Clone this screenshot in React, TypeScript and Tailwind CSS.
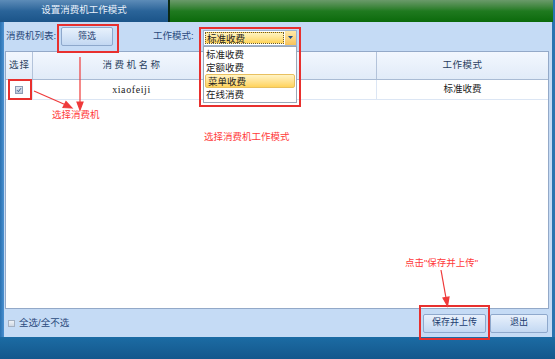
import React from "react";

const font = { fontFamily: '"Liberation Sans","Noto Sans CJK SC",sans-serif' };

function Btn({ label, w }: { label: string; w: string }) {
  return (
    <div
      className={`${w} h-[19px] flex items-center justify-center rounded-[2px] border border-[#8ea8cc] bg-gradient-to-b from-[#e8f1fc] to-[#c3d8f2] text-[9px] text-[#1d3d70]`}
    >
      {label}
    </div>
  );
}

export default function App() {
  return (
    <div className="relative w-[555px] h-[359px] overflow-hidden flex flex-col bg-[#c5dbf5]" style={font}>
      {/* title bar */}
      <div className="h-[22px] flex">
        <div className="w-[168px] bg-gradient-to-b from-[#5d8cb8] via-[#2a6499] to-[#1b5489] flex items-center justify-center text-[9.5px] text-[#e8f0fa] pb-[2px]">
          设置消费机工作模式
        </div>
        <div className="w-[2px] bg-[#0b2a14]" />
        <div className="flex-1 bg-gradient-to-b from-[#6a9a6a] via-[#1f7a1f] to-[#0a6a0a]" />
        <div className="w-[2px] bg-[#2a74b0]" />
      </div>

      {/* middle */}
      <div className="flex-1 flex">
        <div className="w-[4px] bg-gradient-to-r from-[#2a72b2] to-[#4a90d0]" />
        <div className="flex-1 flex flex-col">
          {/* toolbar */}
          <div className="h-[29px] flex items-center text-[9.5px] text-[#2b4a7c]">
            <div className="w-[57px] pl-[2px]">消费机列表:</div>
            <Btn label="筛选" w="w-[52px]" />
            <div className="w-[40px]" />
            <div className="w-[50px]">工作模式:</div>
            <div className="relative w-[94px] h-[16px] flex border border-[#9fb3cf] bg-white mt-[2px]">
              <div className="flex-1 m-[1px] border border-dotted border-[#6a5a30] bg-gradient-to-b from-[#fff4c0] to-[#ffd455] text-[9.5px] text-[#222] leading-[11px] pl-[1px]">
                标准收费
              </div>
              <div className="w-[11px] flex items-center justify-center bg-gradient-to-b from-[#ffe9a8] to-[#f7c35a]">
                <svg width="5" height="3" viewBox="0 0 5 3">
                  <path d="M0 0 L5 0 L2.5 3 Z" fill="#1d4a8a" />
                </svg>
              </div>
              {/* dropdown list */}
              <div className="absolute left-[-1px] top-[15px] w-[94px] h-[57px] border border-[#9aa8b8] bg-white flex flex-col pt-[1px] text-[9.5px] text-[#222] z-10">
                <div className="h-[13px] pl-[2px] leading-[13px]">标准收费</div>
                <div className="h-[13px] pl-[2px] leading-[13px]">定额收费</div>
                <div className="h-[14px] pl-[2px] leading-[14px] mx-[1px] rounded-[2px] border border-[#e8c060] bg-gradient-to-b from-[#fff3c4] to-[#ffd35a]">菜单收费</div>
                <div className="h-[13px] pl-[2px] leading-[13px]">在线消费</div>
              </div>
            </div>
          </div>

          {/* grid */}
          <div className="flex-1 ml-[1px] mr-[3px] border border-[#93a9c8] bg-white flex flex-col">
            <div className="h-[28px] flex border-b border-[#a9bbd4] bg-gradient-to-b from-[#f2f7fe] to-[#e1ebf8] text-[9.5px] text-[#2a3f60]">
              <div className="w-[27px] border-r border-[#b3c3da] flex items-center justify-center tracking-[1px] pl-[1px]">选择</div>
              <div className="w-[198px] border-r border-[#b3c3da] flex items-center justify-center tracking-[2.5px] pl-[2px]">消费机名称</div>
              <div className="w-[146px] border-r border-[#b3c3da] flex items-center pl-[25px]">安装位置</div>
              <div className="flex-1 flex items-center justify-center tracking-[0.5px]">工作模式</div>
            </div>
            <div className="h-[20px] flex border-b border-[#dce6f4] text-[9.5px] text-[#222]">
              <div className="w-[27px] border-r border-[#dce6f4] flex items-center justify-center">
                <div className="w-[8px] h-[8px] border border-[#8c9cb4] bg-gradient-to-b from-[#dfe6f0] to-[#b9c6d8] flex items-center justify-center">
                  <svg width="6" height="6" viewBox="0 0 6 6">
                    <path d="M1 3.2 L2.4 4.6 L5 1.2" stroke="#3a5a8a" strokeWidth="1" fill="none" />
                  </svg>
                </div>
              </div>
              <div
                className="w-[198px] border-r border-[#dce6f4] flex items-center justify-center text-[10px] tracking-[0.6px]"
                style={{ fontFamily: '"Liberation Serif",serif' }}
              >
                xiaofeiji
              </div>
              <div className="w-[146px] border-r border-[#dce6f4] flex items-center pl-[25px]">一楼餐厅</div>
              <div className="flex-1 flex items-center justify-center">标准收费</div>
            </div>
          </div>

          {/* footer */}
          <div className="h-[28px] flex items-center text-[9.5px] text-[#2b4a7c]">
            <div className="ml-[4px] w-[7px] h-[7px] border border-[#a3b0c2] bg-gradient-to-b from-[#eef2f7] to-[#cfd8e4]" />
            <div className="ml-[4px]">全选/全不选</div>
            <div className="flex-1" />
            <Btn label="保存并上传" w="w-[63px]" />
            <div className="w-[4px]" />
            <Btn label="退出" w="w-[58px]" />
            <div className="w-[4px]" />
          </div>
        </div>
        <div className="w-[3px] bg-[#2a74b0]" />
      </div>

      {/* bottom bar */}
      <div className="h-[22px] bg-gradient-to-b from-[#1c6ca4] to-[#14578c]" />

      {/* annotations overlay */}
      <svg className="absolute inset-0 pointer-events-none" width="555" height="359" viewBox="0 0 555 359">
        <g fill="none" stroke="#e8302e" strokeWidth="2">
          <rect x="58" y="25" width="60" height="27" />
          <rect x="200" y="28" width="100" height="78" />
          <rect x="9" y="80" width="22" height="19" />
          <rect x="420" y="306" width="69" height="33" />
        </g>
        <g stroke="#ef3a3a" strokeWidth="1.2" fill="#ef3a3a">
          <line x1="34" y1="91" x2="66" y2="105" />
          <path d="M72 108 L63 107.5 L66 101.5 Z" />
          <line x1="80" y1="57" x2="80" y2="103" />
          <path d="M80 110 L77 102 L83 102 Z" />
          <line x1="441" y1="270" x2="446" y2="298" />
          <path d="M447.5 306 L443 298 L449 297 Z" />
        </g>
      </svg>
      <div className="absolute left-[52px] top-[109px] text-[9.5px] text-[#ff3a3a] leading-[12px]">选择消费机</div>
      <div className="absolute left-[204px] top-[131px] text-[9.5px] text-[#ff3a3a] leading-[12px]">选择消费机工作模式</div>
      <div className="absolute left-[405px] top-[257px] text-[9.5px] text-[#ff3a3a] leading-[12px]">点击"保存并上传"</div>
    </div>
  );
}
